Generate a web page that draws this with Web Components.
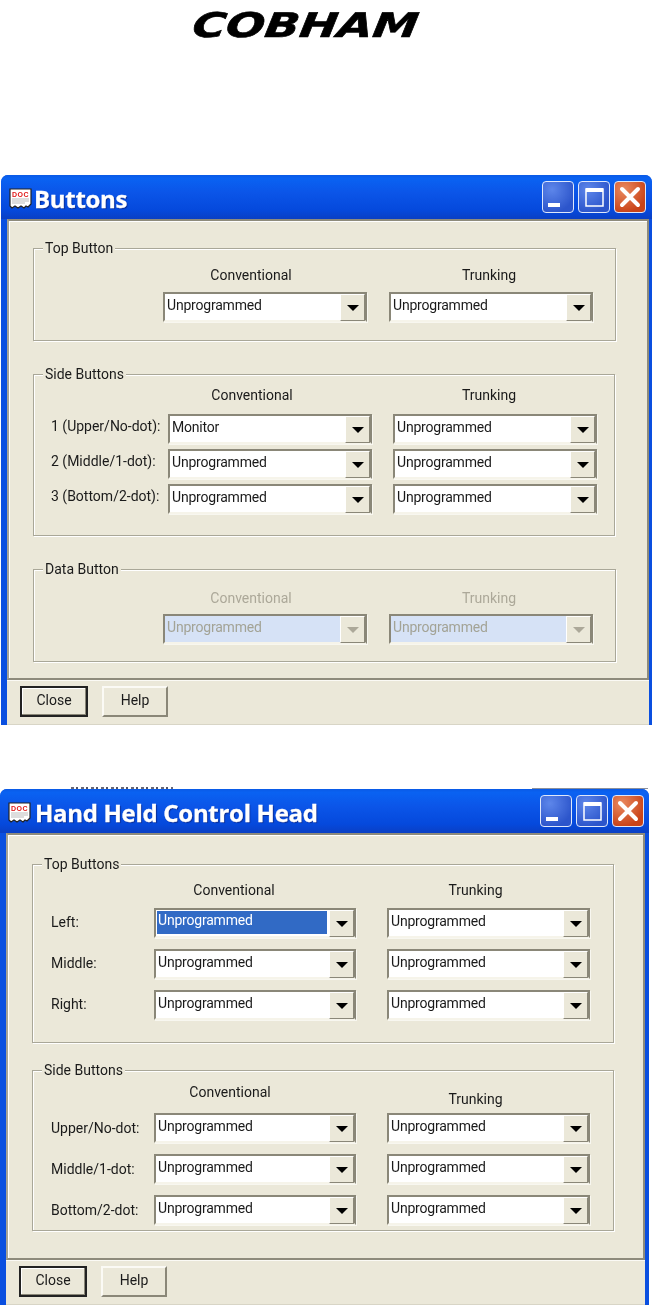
<!DOCTYPE html>
<html>
<head>
<meta charset="utf-8">
<title>Buttons</title>
<style>
  html, body { margin: 0; background: #fff; }
  body { font-family: Roboto, "Liberation Sans", Arial, sans-serif; width: 652px; height: 1305px; overflow: hidden; }
</style>
</head>
<body>
<x-logo></x-logo>

<x-window caption="Buttons" style="margin-left:1px;width:651px;height:550px;--rm:3px;--br:6px;--cm:-2px">
  <x-group legend="Top Button" style="margin:27px 0 0 24px;width:583px;height:93px;--cols:107px 204px 204px;--pt:18px;--hh:25px">
    <span></span><x-head style="margin-right:28px">Conventional</x-head><x-head style="margin-right:4px">Trunking</x-head>
    <span></span><x-combo></x-combo><x-combo></x-combo>
  </x-group>
  <x-group legend="Side Buttons" style="margin:33px 0 0 24px;width:582px;height:162px;--cols:96px 204px 204px;--pl:17px;--cg:21px;--pt:12px;--hh:22px;--rg:5px;--lb:6px">
    <span></span><x-head style="margin-right:36px">Conventional</x-head><x-head style="margin-right:12px">Trunking</x-head>
    <x-label>1 (Upper/No-dot):</x-label><x-combo value="Monitor"></x-combo><x-combo></x-combo>
    <x-label>2 (Middle/1-dot):</x-label><x-combo></x-combo><x-combo></x-combo>
    <x-label>3 (Bottom/2-dot):</x-label><x-combo></x-combo><x-combo></x-combo>
  </x-group>
  <x-group legend="Data Button" style="margin:33px 0 0 24px;width:583px;height:93px;--cols:107px 204px 204px;--pt:20px;--hh:24px">
    <span></span><x-head disabled style="margin-right:28px">Conventional</x-head><x-head disabled style="margin-right:4px">Trunking</x-head>
    <span></span><x-combo disabled></x-combo><x-combo disabled></x-combo>
  </x-group>
  <x-btn slot="footer" default>Close</x-btn>
  <x-btn slot="footer">Help</x-btn>
</x-window>

<x-crumbs></x-crumbs>

<x-window caption="Hand Held Control Head" style="width:649px;height:516px;--rm:4px;--br:5px;--cm:0px">
  <x-group legend="Top Buttons" style="margin:29px 0 0 24px;width:582px;height:179px;--cols:72px 202px 203px;--pl:18px;--cg:31px;--pt:17px;--hh:15px;--rg:11px;--lb:2px">
    <span></span><x-head style="margin-right:42px">Conventional</x-head><x-head style="margin-right:26px">Trunking</x-head>
    <x-label>Left:</x-label><x-combo selected></x-combo><x-combo></x-combo>
    <x-label>Middle:</x-label><x-combo></x-combo><x-combo></x-combo>
    <x-label>Right:</x-label><x-combo></x-combo><x-combo></x-combo>
  </x-group>
  <x-group legend="Side Buttons" style="margin:27px 0 0 24px;width:582px;height:161px;--cols:72px 202px 203px;--pl:18px;--cg:31px;--pt:13px;--hh:18px;--rg:11px">
    <span></span><x-head style="margin-right:50px">Conventional</x-head><x-head style="margin:7px 26px 0 0">Trunking</x-head>
    <x-label>Upper/No-dot:</x-label><x-combo></x-combo><x-combo></x-combo>
    <x-label>Middle/1-dot:</x-label><x-combo></x-combo><x-combo></x-combo>
    <x-label>Bottom/2-dot:</x-label><x-combo></x-combo><x-combo></x-combo>
  </x-group>
  <x-btn slot="footer" default>Close</x-btn>
  <x-btn slot="footer">Help</x-btn>
</x-window>

<script>
function define(name, css, html) {
  customElements.define(name, class extends HTMLElement {
    connectedCallback() {
      if (this.shadowRoot) return;
      this.attachShadow({ mode: "open" });
      this.shadowRoot.innerHTML = `<style>${css}</style>${typeof html === "function" ? html(this) : html}`;
    }
  });
}

define("x-logo", `
  :host{display:block;height:175px;overflow:hidden;filter:blur(.4px)}
  .t{margin:5px 0 0 193px;width:max-content;font:italic 700 34px/40px "DejaVu Sans",sans-serif;color:#000;transform-origin:0 50%;transform:scaleX(1.34) skewX(-6deg);-webkit-text-stroke:.6px #000}
`, `<div class="t">COBHAM</div>`);

// scraps of the window behind, cut off just above the second title bar
define("x-crumbs", `
  :host{display:flex;justify-content:space-between;height:2px;margin:62px 0 0 71px;width:577px}
  .d{width:102px;background:repeating-linear-gradient(90deg,#667 0 3px,#fff 3px 5px,#556 5px 7px,#fff 7px 10px)}
  .l{width:116px;height:1px;align-self:flex-end;background:#8a8f9c}
`, `<div class="d"></div><div class="l"></div>`);

define("x-window", `
  :host{display:flex;flex-direction:column;box-sizing:border-box;overflow:hidden;border-radius:7px 7px 0 0;
    background:#0a4fe0;font-size:14px;color:#1a1a1a;filter:blur(.35px)}
  .bar{flex:none;height:44px;box-sizing:border-box;display:flex;align-items:center;padding:3px var(--br) 0 8px;gap:4px;
    background:linear-gradient(#0a5ae6 0,#0a62f2 8%,#0b55e8 40%,#0549dc 80%,#0a3fc4 100%)}
  .cap{flex:1;margin-left:var(--cm);font:700 24px/1 "Open Sans",sans-serif;letter-spacing:-.3px;color:#fff;-webkit-text-stroke:.3px #fff;text-shadow:1px 1px 1px #0a2a90;white-space:nowrap}
  .body{flex:1;display:flex;flex-direction:column;margin:0 var(--rm) 0 6px;background:#ebe8d9;min-height:0}
  .client{flex:1;box-sizing:border-box;border:2px solid;border-color:#8e8b7c #8e8b7c #8e8b7c #a5a296;box-shadow:inset 1px 1px 0 #fff,0 1px 0 #fbfaf5;display:flow-root}
  .foot{flex:none;height:45px;display:flex;gap:14px;padding:6px 0 0 13px;box-sizing:border-box;border-bottom:1px solid #d8d5c6}
  .b{width:32px;height:32px;margin-top:-3px;box-sizing:border-box;border:1px solid #dfe8fb;border-radius:4px;position:relative;
     background:radial-gradient(circle at 30% 25%,#5d86ea,#2c55cb 75%)}
  .b.x{background:radial-gradient(circle at 30% 25%,#ea8a60,#c94318 75%)}
  .b svg{position:absolute;inset:-1px}
`, (el) => `
  <div class="bar">
    <svg style="flex:none" width="23" height="22" viewBox="0 0 23 22">
      <path d="M1 1h21v15l-3 3-2-1-2 2-3-2-3 2-3-2-3 2-2-2z" fill="#fff" stroke="#222" stroke-width="1.2"/>
      <text x="11.5" y="8.5" text-anchor="middle" font-family="Liberation Sans" font-weight="700" font-size="7" letter-spacing=".4" fill="#e01818">DOC</text>
      <path d="M3 11h17M3 13h17M3 15h13" stroke="#bbb"/>
    </svg>
    <div class="cap">${el.getAttribute("caption")}</div>
    <div class="b"><svg viewBox="0 0 32 32"><rect x="6" y="22" width="12" height="4" fill="#fff"/></svg></div>
    <div class="b"><svg viewBox="0 0 32 32"><path d="M8 8h17v17H8z" fill="none" stroke="#fff" stroke-width="1.5"/><rect x="8" y="7" width="17" height="4" fill="#fff"/></svg></div>
    <div class="b x"><svg viewBox="0 0 32 32"><path d="M8 8l16 16M24 8L8 24" stroke="#fff" stroke-width="4" stroke-linecap="round"/></svg></div>
  </div>
  <div class="body">
    <div class="client"><slot></slot></div>
    <div class="foot"><slot name="footer"></slot></div>
  </div>`);

define("x-group", `
  :host{display:block;box-sizing:border-box;position:relative;border:1px solid #a9a798;box-shadow:inset 1px 1px 0 #fff,1px 1px 0 #fff}
  .l{position:absolute;left:9px;top:-9px;background:#ebe8d9;padding:0 2px;line-height:17px}
  .g{display:grid;grid-template-columns:var(--cols);grid-template-rows:var(--hh) auto;row-gap:var(--rg,0);column-gap:var(--cg,22px);padding:var(--pt) 0 0 var(--pl,0);align-items:center}
`, (el) => `<div class="l">${el.getAttribute("legend")}</div><div class="g"><slot></slot></div>`);

define("x-head", `
  :host{display:block;text-align:center;line-height:17px;align-self:start;white-space:nowrap}
  :host([disabled]){color:#aca899}
`, `<slot></slot>`);

define("x-label", `:host{display:block;white-space:nowrap;line-height:17px;padding-bottom:var(--lb,0)}`, `<slot></slot>`);

define("x-combo", `
  :host{display:flex;box-sizing:border-box;height:30px;border:2px solid;border-color:#8a8778 #8a8778 #f6f4ea #8a8778;background:#fff;box-shadow:1px 1px 0 #f8f7f0}
  .v{flex:1;padding-left:2px;line-height:22px;letter-spacing:-.2px;white-space:nowrap;overflow:hidden}
  :host([selected]) .v{background:#316ac5;color:#fff;margin:1px 2px 2px 1px;padding-left:1px;line-height:19px}
  :host([disabled]) .v{background:#d6e2f6;color:#a3a396}
  .a{flex:none;width:25px;box-sizing:border-box;background:#ebe8d9;display:flex;align-items:center;justify-content:center;border:1px solid;border-color:#fff #8a8778 #8a8778 #fff;margin-bottom:-1px}
  .a i{width:0;height:0;border:6px solid transparent;border-top:6px solid #000;border-bottom:0}
  :host([disabled]) .a i{border-top-color:#aca899}
`, (el) => `<div class="v">${el.getAttribute("value") || "Unprogrammed"}</div><div class="a"><i></i></div>`);

define("x-btn", `
  :host{display:flex;align-items:center;justify-content:center;box-sizing:border-box;width:66px;height:31px;padding-bottom:3px;background:#ebe8d9;border:2px solid;border-color:#fbfaf5 #8a8778 #8a8778 #fbfaf5}
  :host([default]){width:68px;border-color:#222;box-shadow:inset -1px -1px 0 #8a8778,inset 1px 1px 0 #fff}
`, `<slot></slot>`);
</script>
</body>
</html>
